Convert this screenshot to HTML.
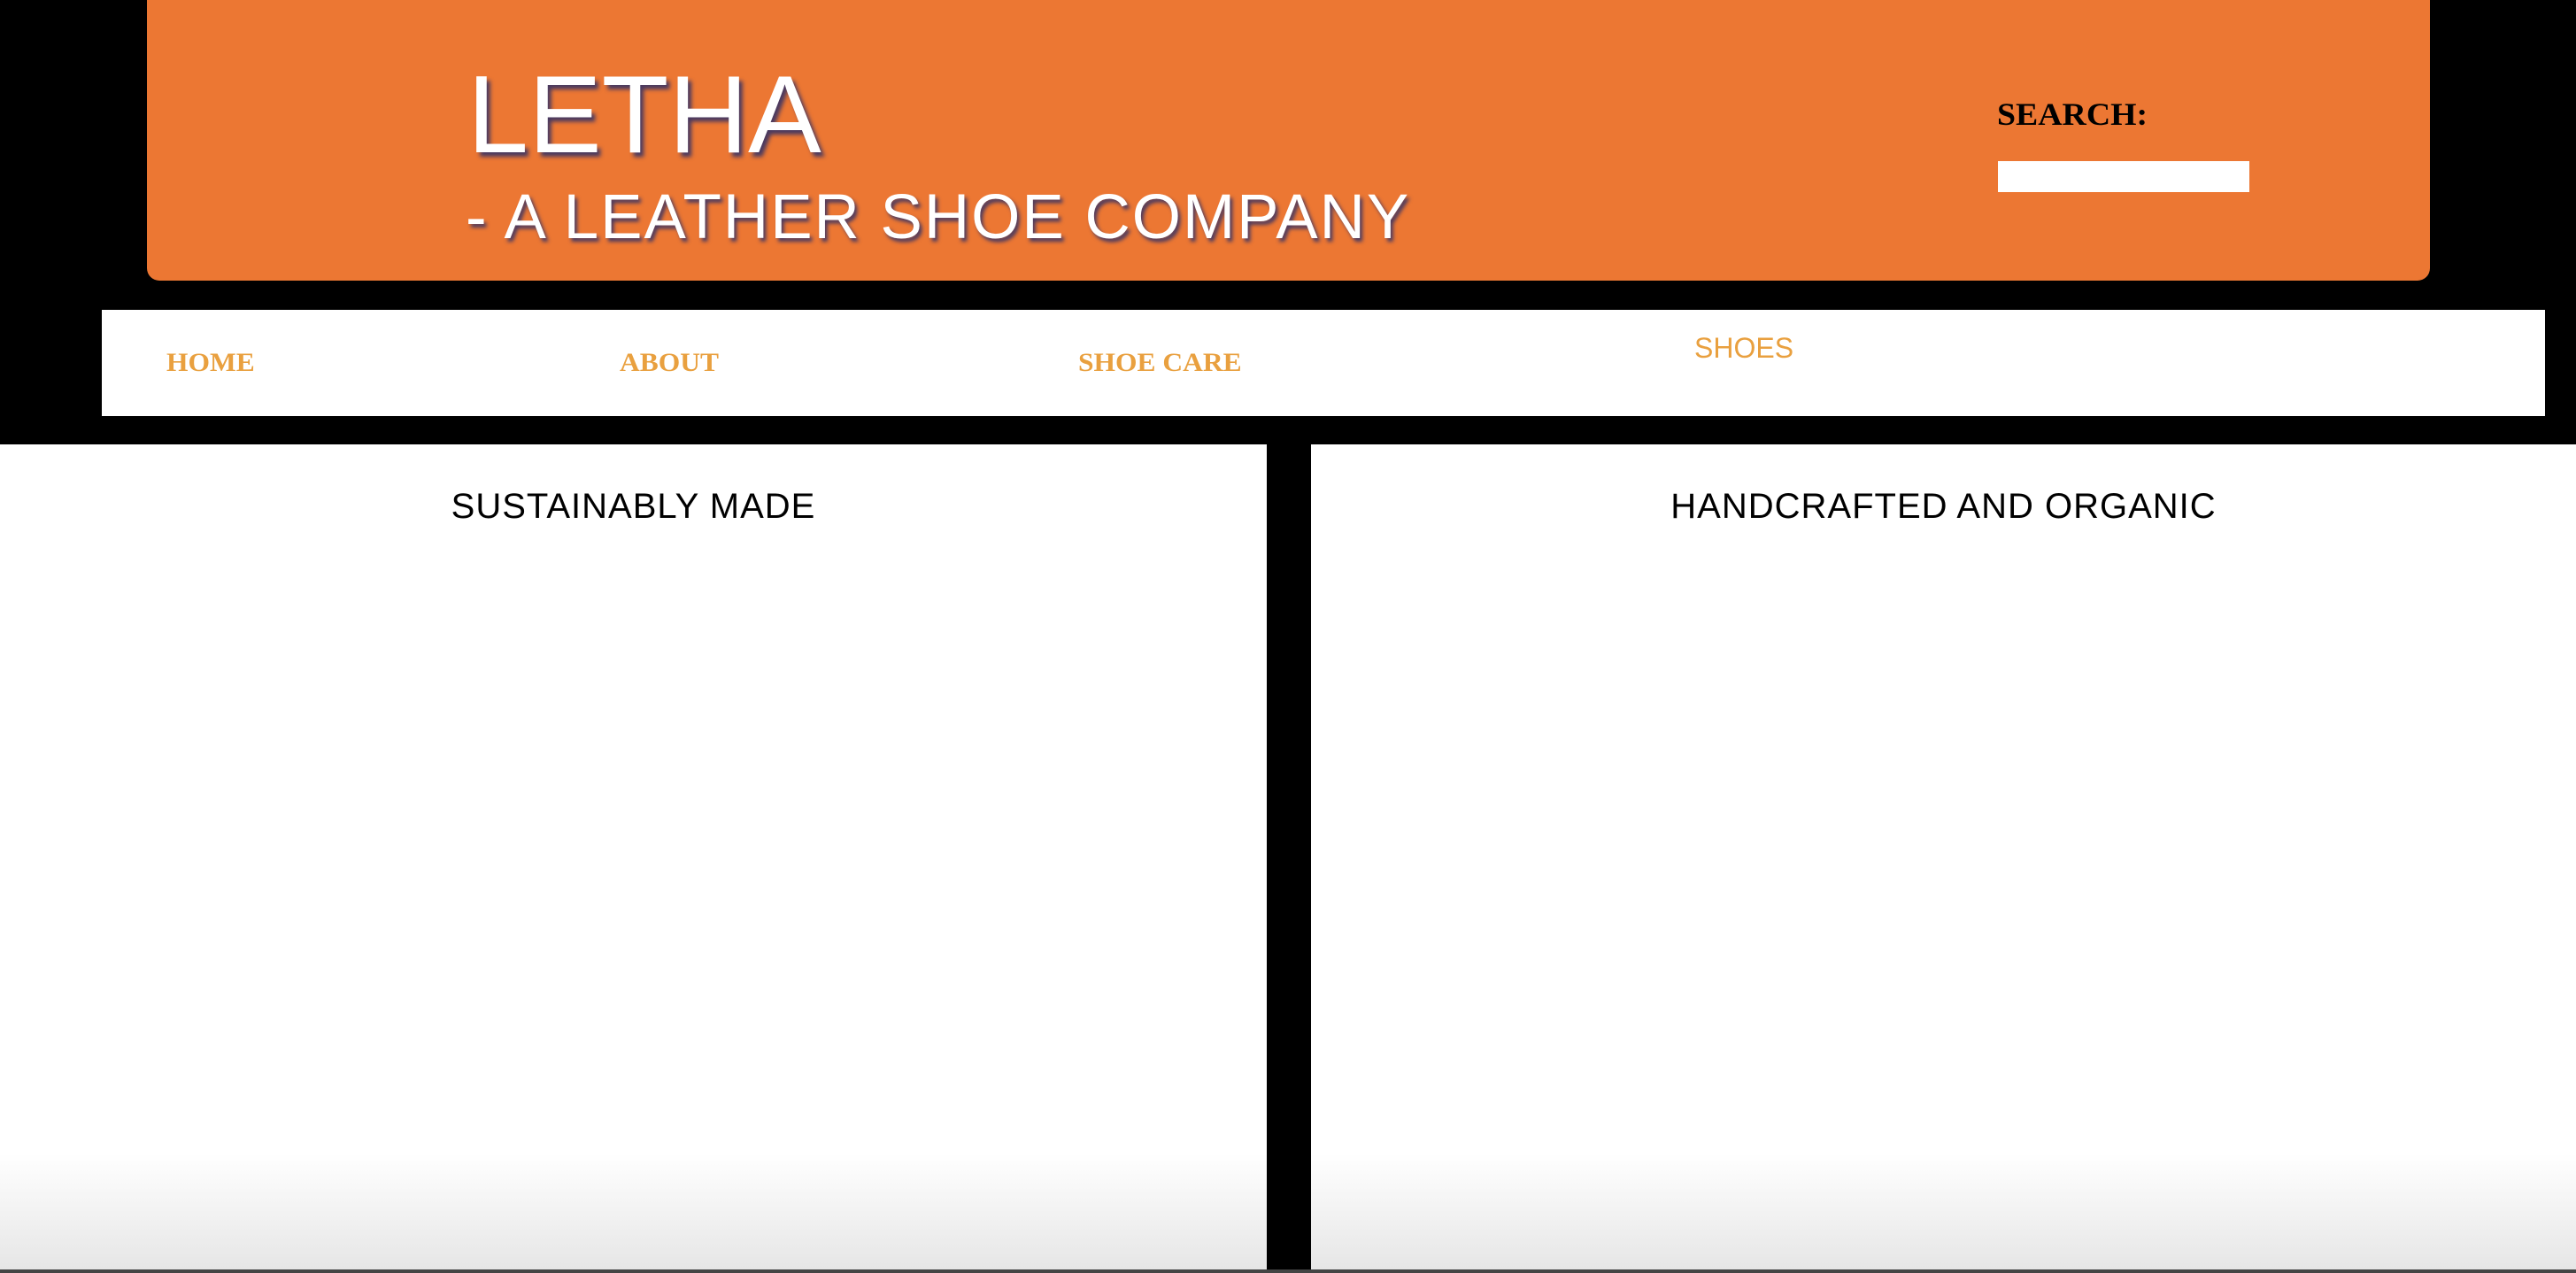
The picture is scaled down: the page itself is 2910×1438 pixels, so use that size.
<!DOCTYPE html>
<html><head><style>
html,body{margin:0;padding:0;background:#000;width:2910px;height:1438px;overflow:hidden;font-family:"Liberation Sans",sans-serif}
.hdr{position:absolute;left:166px;top:0;width:2579px;height:317px;background:#ec7733;border-radius:0 0 14px 14px}
.t1{position:absolute;left:528px;top:68px;font-size:124px;color:#fff;text-shadow:4px 5px 5px #4a3a60;line-height:1}
.t2{position:absolute;left:526px;top:210px;font-size:71px;color:#fff;text-shadow:3px 4px 4px #4a3a60;line-height:1;letter-spacing:2px}
.srch{position:absolute;left:2256px;top:108px;font:bold 36px "Liberation Serif",serif;color:#000;transform:scaleX(1.05);transform-origin:left}
.inp{position:absolute;left:2257px;top:182px;width:284px;height:35px;background:#fff}
.nav{position:absolute;left:115px;top:350px;width:2760px;height:120px;background:#fff}
.nav span{position:absolute;font:bold 30px "Liberation Serif",serif;color:#e9a03f;top:43px;transform:scaleX(1.05);transform-origin:left}
.nav .s{font:32px "Liberation Sans",sans-serif;top:25px;transform:none}
.p{position:absolute;top:502px;height:932px;background:linear-gradient(#fff 0,#fff 86%,#e6e6e6 100%);text-align:center;font-size:40px;color:#000;letter-spacing:1px}
.p div{margin-top:48px}
.line{position:absolute;left:0;top:1434px;width:2910px;height:4px;background:#444}
</style></head><body>
<div class="hdr"></div>
<div class="t1">LETHA</div>
<div class="t2">- A LEATHER SHOE COMPANY</div>
<div class="srch">SEARCH:</div>
<div class="inp"></div>
<div class="nav">
<span style="left:73px">HOME</span>
<span style="left:585px">ABOUT</span>
<span style="left:1103px">SHOE CARE</span>
<span class="s" style="left:1799px">SHOES</span>
</div>
<div class="p" style="left:0;width:1431px"><div>SUSTAINABLY MADE</div></div>
<div class="p" style="left:1481px;width:1429px"><div>HANDCRAFTED AND ORGANIC</div></div>
<div class="line"></div>
</body></html>
